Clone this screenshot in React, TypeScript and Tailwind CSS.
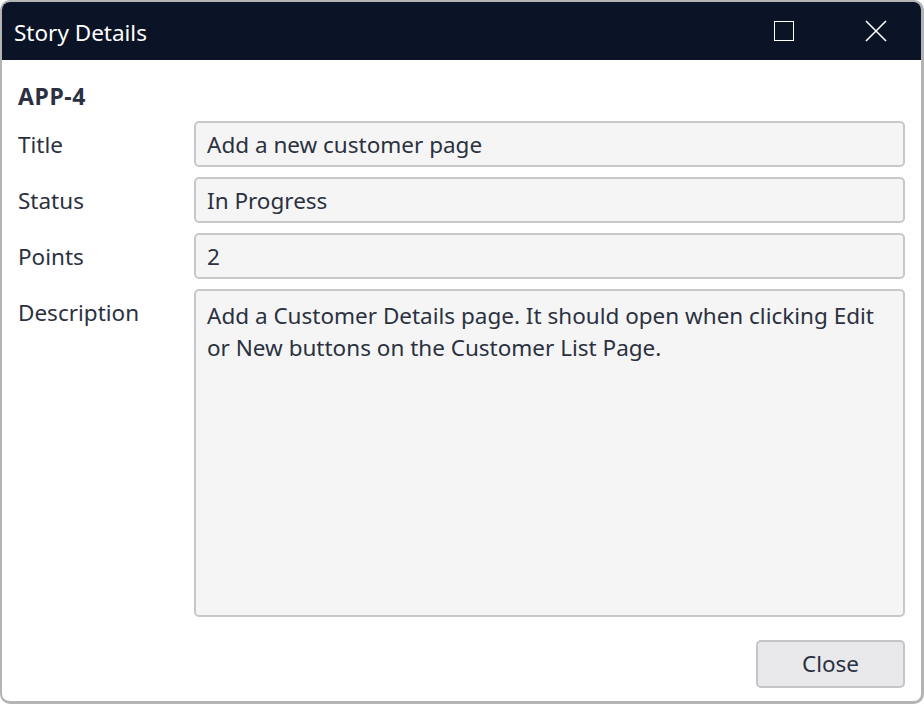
import React from "react";

export default function App() {
  const font = { fontFamily: '"Noto Sans", "Open Sans", sans-serif' };
  return (
    <div className="w-[924px] h-[704px] bg-white" style={font}>
      <div className="w-full h-full flex flex-col border-2 border-r-[3px] border-b-[3px] border-[#b4b4b4] rounded-[10px] overflow-hidden bg-white">
        <div className="h-[58px] shrink-0 bg-[#0b1426] flex items-center pl-3 text-white">
          <span className="text-[22.5px] flex-1 pt-[4px]">Story Details</span>
          <div className="w-[20px] h-[20px] border-[1.5px] border-white mr-[70px]" />
          <svg width="24" height="24" viewBox="0 0 24 24" className="mr-[33px]">
            <path d="M2 2 L22 22 M22 2 L2 22" stroke="white" strokeWidth="1.6" />
          </svg>
        </div>
        <div className="flex-1 flex flex-col px-4 pt-[21px] pb-[13px] text-[#2b3140]">
          <div className="text-[23px] tracking-[0.6px] font-bold leading-[30px] h-[30px]">APP-4</div>
          <div className="flex flex-col gap-[10px] mt-[10px]">
            {[
              ["Title", "Add a new customer page"],
              ["Status", "In Progress"],
              ["Points", "2"],
            ].map(([l, v]) => (
              <div key={l} className="flex items-center">
                <div className="w-[176px] text-[22.5px] pt-[2px]">{l}</div>
                <div className="flex-1 h-[46px] bg-[#f5f5f5] border-2 border-[#c8c8cc] rounded-[5px] flex items-center px-[11px] pt-[2px] text-[22.5px]">
                  {v}
                </div>
              </div>
            ))}
            <div className="flex items-start">
              <div className="w-[176px] text-[22.5px] pt-[7px]">Description</div>
              <div className="flex-1 h-[328px] bg-[#f5f5f5] border-2 border-[#c8c8cc] rounded-[5px] px-[11px] pt-[9px] text-[22.5px] leading-[32px]">
                Add a Customer Details page. It should open when clicking Edit or New buttons on the Customer List Page.
              </div>
            </div>
          </div>
          <div className="flex-1" />
          <div className="flex justify-end">
            <button className="w-[149px] h-[48px] bg-[#e9e9ec] border-2 border-[#c5c5c9] rounded-[5px] text-[22.5px] text-[#2b3140]">
              Close
            </button>
          </div>
        </div>
      </div>
    </div>
  );
}
